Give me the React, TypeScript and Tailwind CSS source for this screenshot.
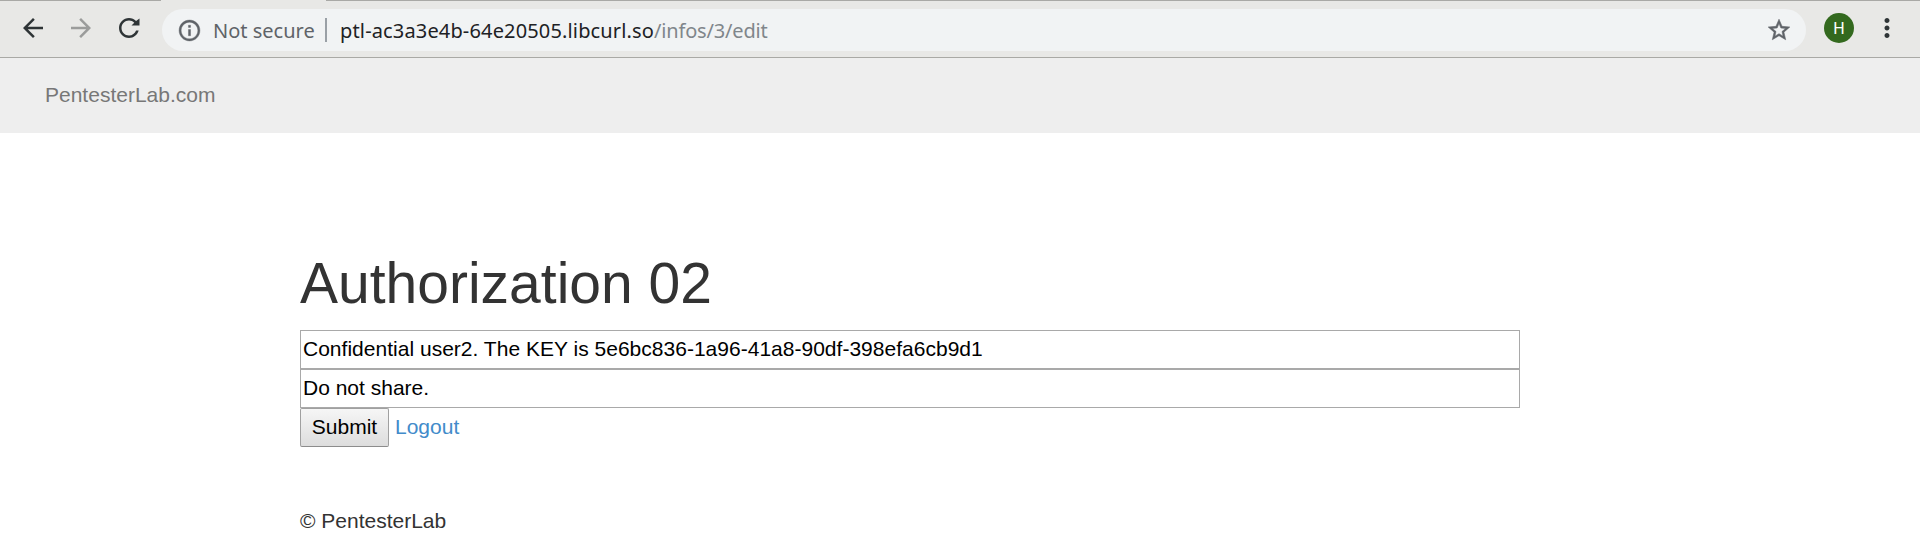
import React from "react";

type IconProps = { d: string; className: string };

function Icon({ d, className }: IconProps) {
  return (
    <svg viewBox="0 0 24 24" fill="currentColor" className={`shrink-0 ${className}`} aria-hidden="true">
      <path d={d} />
    </svg>
  );
}

const BACK = "M20 11H7.83l5.59-5.59L12 4l-8 8 8 8 1.41-1.41L7.83 13H20v-2z";
const FORWARD = "M12 4l-1.41 1.41L16.17 11H4v2h12.17l-5.58 5.59L12 20l8-8z";
const RELOAD =
  "M17.65 6.35C16.2 4.9 14.21 4 12 4c-4.42 0-7.99 3.58-7.99 8s3.57 8 7.99 8c3.73 0 6.84-2.55 7.73-6h-2.08c-.82 2.33-3.04 4-5.65 4-3.31 0-6-2.69-6-6s2.69-6 6-6c1.66 0 3.14.69 4.22 1.78L14 10h6.4V4.4z";
const INFO =
  "M11 7h2v2h-2zm0 4h2v6h-2zm1-9C6.48 2 2 6.48 2 12s4.48 10 10 10 10-4.48 10-10S17.52 2 12 2zm0 18c-4.41 0-8-3.59-8-8s3.59-8 8-8 8 3.59 8 8-3.59 8-8 8z";
const STAR =
  "M22 9.24l-7.19-.62L12 2 9.19 8.63 2 9.24l5.46 4.73L5.82 21 12 17.27 18.18 21l-1.63-7.03L22 9.24zM12 15.4l-3.76 2.27 1-4.28-3.32-2.88 4.38-.38L12 6.1l1.71 4.04 4.38.38-3.32 2.88 1 4.28L12 15.4z";
const MORE =
  "M12 8c1.1 0 2-.9 2-2s-.9-2-2-2-2 .9-2 2 .9 2 2 2zm0 2c-1.1 0-2 .9-2 2s.9 2 2 2 2-.9 2-2-.9-2-2-2zm0 6c-1.1 0-2 .9-2 2s.9 2 2 2 2-.9 2-2-.9-2-2-2z";

function BrowserToolbar() {
  return (
    <header className="h-[58px] border-b border-[#a9a9a5] bg-[#e8e8e6]">
      <div className="flex h-px justify-between">
        <div className="w-[161px] bg-[#a9a9a6]" />
        <div className="w-[1594px] bg-[#a9a9a6]" />
      </div>
      <div className="flex pl-[18px] pt-2 font-['Noto_Sans',sans-serif]">
        <div className="flex w-36 gap-[18px] pt-1 text-[#2e3436]">
          <Icon d={BACK} className="size-[30px]" />
          <Icon d={FORWARD} className="size-[30px] text-[#9b9c9b]" />
          <Icon d={RELOAD} className="size-[30px]" />
        </div>
        <div className="flex h-[42px] w-[1644px] items-center rounded-full bg-[#f1f3f4] pl-[15px] pr-[14px] text-xl leading-none">
          <Icon d={INFO} className="size-[25px] stroke-current stroke-[0.4] text-[#5f6368]" />
          <span className="ml-[11px] w-[112px] whitespace-nowrap pt-0.5 text-[#5f6368]">Not secure</span>
          <span className="-mt-px h-6 w-0.5 bg-[#9aa0a6]" />
          <span className="ml-[13px] grow whitespace-nowrap pt-0.5 tracking-[0.15px] text-[#202124]">
            ptl-ac3a3e4b-64e20505.libcurl.so
            <span className="tracking-[-0.18px] text-[#80868b]">/infos/3/edit</span>
          </span>
          <Icon d={STAR} className="size-[26px] stroke-current stroke-[0.5] text-[#5f6368]" />
        </div>
        <div className="ml-[18px] mt-1 flex size-[30px] items-center justify-center rounded-full bg-[#33691e] pt-px font-['Roboto',sans-serif] text-base text-white">
          H
        </div>
        <Icon d={MORE} className="ml-[18px] mt-1 size-[30px] text-[#2e3436]" />
      </div>
    </header>
  );
}

export default function App() {
  return (
    <div className="h-[534px] overflow-hidden bg-white font-['Liberation_Sans',Arial,sans-serif] text-[21px] leading-[30px] text-[#333333]">
      <BrowserToolbar />
      <nav className="h-[75px] bg-[#eeeeee] pl-[45px] pt-[22px] text-[#777777]">PentesterLab.com</nav>
      <main className="ml-[300px] w-[1220px] pt-[119px]">
        <h1 className="mb-[15px] text-[57px] leading-[63px]">Authorization 02</h1>
        <form>
          <input
            className="block h-[39px] w-full border border-[#a9a9a9] bg-white px-0.5 pb-0.5 tracking-[0.015px] text-black"
            defaultValue="Confidential user2. The KEY is 5e6bc836-1a96-41a8-90df-398efa6cb9d1"
          />
          <input
            className="block h-[39px] w-full border border-[#a9a9a9] bg-white px-0.5 pb-0.5 text-black"
            defaultValue="Do not share."
          />
          <div className="flex items-start gap-[6px]">
            <button
              type="button"
              className="h-[39px] w-[89px] rounded-[2px] border border-[#a0a0a0] border-b-[#8c8c8c] bg-linear-to-b from-[#f6f6f6] to-[#dddddd] pb-0.5 text-black"
            >
              Submit
            </button>
            <a className="pt-1 text-[#428bca]">Logout</a>
          </div>
        </form>
        <footer className="mt-[59px]">© PentesterLab</footer>
      </main>
    </div>
  );
}
